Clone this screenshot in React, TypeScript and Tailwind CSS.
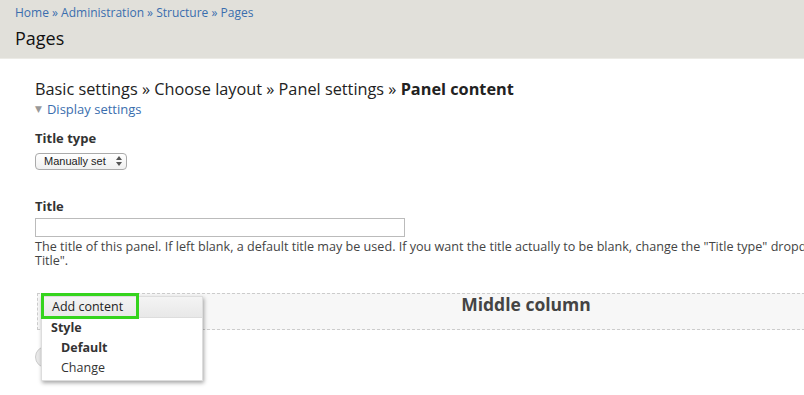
import React from "react";

export default function App() {
  return (
    <div
      className="w-[804px] h-[395px] overflow-hidden bg-white text-[#222]"
      style={{ fontFamily: '"Open Sans", "DejaVu Sans", sans-serif' }}
    >
      <div className="h-[59px] bg-[#e1e0da] border-b border-[#ecebe6] pl-[15px] pt-[5px]">
        <div className="text-[12px] leading-[16px] text-[#3a6eae]">
          Home » Administration » Structure » Pages
        </div>
        <div className="text-[18px] leading-[24px] mt-[5px] text-[#111]">Pages</div>
      </div>

      <div className="w-[1015px] pl-[35px] pt-[19px]">
        <div className="text-[16.3px] leading-[22px] text-[#222]">
          Basic settings » Choose layout » Panel settings » <span className="font-bold">Panel content</span>
        </div>
        <div className="flex items-center text-[13px] leading-[18px] text-[#3a6eae]">
          <span className="text-[9px] text-[#999] mr-[5px]">▼</span>
          Display settings
        </div>

        <div className="mt-[11px] text-[13px] leading-[18px] font-bold text-[#333]">Title type</div>
        <div
          className="inline-flex items-center h-[17px] w-[92px] border border-[#aaa] rounded-[4px] bg-gradient-to-b from-white to-[#f0f0f0] text-[11px] pl-[8px] text-[#222]"
          style={{ fontFamily: '"Liberation Sans", Arial, sans-serif' }}
        >
          Manually set
          <svg width="6" height="10" viewBox="0 0 6 10" className="ml-[10px]">
            <path d="M0 4 L3 0 L6 4 Z" fill="#555" />
            <path d="M0 6 L3 10 L6 6 Z" fill="#555" />
          </svg>
        </div>

        <div className="mt-[26px] text-[13px] leading-[18px] font-bold text-[#333]">Title</div>
        <div className="mt-[3px] w-[370px] h-[19px] border border-[#bbb] bg-white" />
        <div className="mt-[3px] text-[12.6px] leading-[14px] text-[#444]">
          The title of this panel. If left blank, a default title may be used. If you want the title actually to be blank, change the "Title type" dropdown from "Manually Set" to "No Title".
        </div>

        <div className="relative mt-[25px]">
          <div className="ml-[2px] h-[37px] border border-dashed border-[#ccc] bg-[#f7f7f7] flex justify-center pt-[1px]">
            <span className="text-[17.5px] leading-[18px] font-bold text-[#444]">Middle column</span>
          </div>
          <div className="mt-[16px] w-[60px] h-[22px] rounded-[11px] bg-[#e8e8e8] border border-[#ccc]" />

          <div className="absolute left-[6px] top-[3px] w-[162px] bg-white border border-[#ddd] shadow-[1px_2px_4px_rgba(0,0,0,0.35)] text-[12.5px] text-[#333]">
            <div className="h-[21px] bg-gradient-to-b from-[#f4f4f4] to-[#e8e8e8] border-b border-[#ddd] flex items-center pl-[10px] text-[#222]">
              Add content
            </div>
            <div className="h-[20px] flex items-center pl-[9px] font-bold">Style</div>
            <div className="h-[20px] flex items-center pl-[19px] font-bold">Default</div>
            <div className="h-[20px] flex items-center pl-[19px] mb-[2px]">Change</div>
          </div>
          <div className="absolute left-[6px] top-0 w-[98px] h-[26px] border-[3px] border-[#35d41d]" />
        </div>
      </div>
    </div>
  );
}
